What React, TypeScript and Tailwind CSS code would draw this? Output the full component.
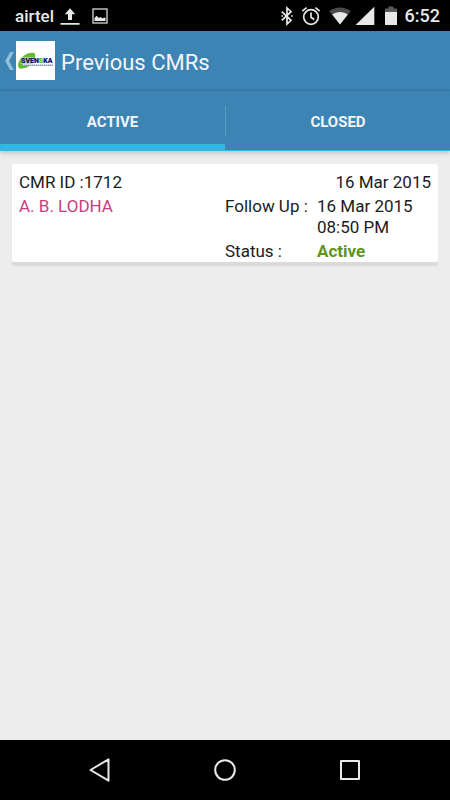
import { useState } from "react";

const StatusBar = () => {
  return (
    <div className="flex h-[31px] shrink-0 items-center justify-between bg-black pr-2.5 pl-[15px] text-[#e8e8e8]">
      <div className="flex items-center">
        <span className="text-[17px] leading-5 font-medium">airtel</span>
        <svg className="ml-[6px] h-5 w-5" viewBox="0 0 20 20" fill="currentColor" aria-hidden="true">
          <path d="M10 2.2 15.2 8.2H12V14H8V8.2H4.8ZM0.5 17h19v1.8H0.5z" />
        </svg>
        <svg className="ml-3 h-4 w-4" viewBox="0 0 16 16" fill="none" aria-hidden="true">
          <path d="M1 1h14v14H1z" stroke="#bdbdbd" strokeWidth="1.5" />
          <path d="M2.5 13V10l2-2.3 2.3 2.2L8.5 9l1.8 1.2L13.5 9.5V13z" fill="#e8e8e8" />
        </svg>
      </div>
      <div className="flex items-center">
        <svg className="h-5 w-3" viewBox="0 0 12 20" fill="none" stroke="currentColor" strokeWidth="1.7" aria-hidden="true">
          <path d="M0.8 5.6 10 14.3 6 18V2l4 3.7L0.8 14.4" />
          <path d="M0.5 9.2h1.6v1.6H0.5zM10 9.2h1.6v1.6H10z" fill="currentColor" stroke="none" />
        </svg>
        <svg className="ml-2 h-5 w-5" viewBox="0 0 20 20" fill="none" stroke="currentColor" strokeWidth="1.7" aria-hidden="true">
          <circle cx="10" cy="11" r="7.3" />
          <path d="M10 6.5v4.8l3.2 2.2M1.3 5.2 5.6 1.7M18.7 5.2 14.4 1.7" />
        </svg>
        <svg className="ml-2 h-5 w-[22px]" viewBox="0 0 22 20" aria-hidden="true">
          <path d="M0.3 5.2C6.5 0.3 15.5 0.3 21.7 5.2L11 18.6Z" fill="#4a4a4a" />
          <path d="M3.2 8.6C7.8 5 14.2 5 18.8 8.6L11 18.6Z" fill="#e8e8e8" />
        </svg>
        <svg className="ml-1 h-5 w-5" viewBox="0 0 20 20" fill="currentColor" aria-hidden="true">
          <path d="M19.3 0.8V19H0.6z" />
        </svg>
        <svg className="ml-2.5 h-5 w-3" viewBox="0 0 12 20" aria-hidden="true">
          <path d="M3.5 0.5h5V2.5H12V7H0V2.5h3.5z" fill="#5a5a5a" />
          <path d="M0 6h12v13H0z" fill="#e8e8e8" />
        </svg>
        <span className="ml-2 text-[18px] leading-5 font-medium">6:52</span>
      </div>
    </div>
  );
};

const Logo = () => {
  return (
    <svg className="h-[39px] w-[39px] bg-white" viewBox="0 0 39 39" role="img" aria-label="Svenska">
      <path
        d="M18.6 12.3C13 10.2 5.5 15 3 20.5C1.2 24.6 2 27.8 5.5 27.7C9 27.5 12.5 25.6 15 24.2L6.5 24.4L7 22.6H16.5C18.6 19 20.2 14.2 18.6 12.3Z"
        fill="#63bd32"
      />
      <path d="M6 16.2H18.4L16 22.8H4.5Z" fill="#b5e295" />
      <text x="5" y="22" fontSize="7" fontWeight="900" fill="#17186f" stroke="#17186f" strokeWidth="0.2">
        SVEN
        <tspan fill="#63bd32" stroke="#63bd32">
          S
        </tspan>
        KA
      </text>
      <path d="M6 24.2h31" stroke="#8991ad" strokeWidth="1.4" strokeDasharray="1.5 0.5" />
    </svg>
  );
};

const Header = () => {
  return (
    <header className="flex h-[60px] shrink-0 items-center border-b border-[#3779a3] bg-[#3b84b4] pl-[5px] text-[#f2f5f7]">
      <button type="button" aria-label="Back" className="flex items-center">
        <svg className="mr-0.5 h-5 w-[9px]" viewBox="0 0 9 20" fill="#94bfd9" aria-hidden="true">
          <path d="M5.2 1H8.8L4.2 10 8.8 19H5.2L0.2 10Z" />
        </svg>
        <Logo />
      </button>
      <h1 className="ml-1.5 pt-1 text-[22px] leading-7">Previous CMRs</h1>
    </header>
  );
};

const tabs = ["ACTIVE", "CLOSED"];

const Tabs = () => {
  const [selected, setSelected] = useState("ACTIVE");

  return (
    <div
      role="tablist"
      className="grid h-[60px] shrink-0 grid-cols-2 border-b border-[#33b5e5] bg-[#3b84b4] shadow-[0_2px_5px_rgba(0,0,0,0.2)]"
    >
      {tabs.map((tab, i) => (
        <button
          key={tab}
          type="button"
          role="tab"
          aria-selected={selected === tab}
          onClick={() => setSelected(tab)}
          className="flex flex-col text-[15px] font-bold text-[#f2f5f7]"
        >
          <span className="flex w-full grow items-center">
            {i > 0 && <span className="h-[30px] w-px bg-[#5b9ac3]" />}
            <span className="grow pt-1 text-center">{tab}</span>
          </span>
          <span className={selected === tab ? "-mt-1.5 h-1.5 w-full bg-[#33b5e5]" : "h-0 w-full"} />
        </button>
      ))}
    </div>
  );
};

const CmrCard = () => {
  return (
    <article className="rounded-xs bg-white px-[7px] pt-2 text-[17px] leading-[21px] text-[#1b1b1b] shadow-[0_4px_1px_#dadada]">
      <div className="flex justify-between">
        <h2>CMR ID :1712</h2>
        <time>16 Mar 2015</time>
      </div>
      <div className="mt-[3px] grid grid-cols-2">
        <p className="text-[#c73e82]">A. B. LODHA</p>
        <dl className="grid grid-cols-[92px_1fr] gap-y-[3px]">
          <dt>Follow Up :</dt>
          <dd>
            16 Mar 2015
            <br />
            08:50 PM
          </dd>
          <dt>Status :</dt>
          <dd className="font-bold text-[#5c961d]">Active</dd>
        </dl>
      </div>
    </article>
  );
};

const NavigationBar = () => {
  return (
    <nav className="flex h-[60px] shrink-0 items-center justify-center gap-[101px] bg-black text-[#e8e8e8]">
      <button type="button" aria-label="Back">
        <svg className="h-6 w-6" viewBox="0 0 24 24" fill="none" stroke="currentColor" strokeWidth="2" strokeLinejoin="round">
          <path d="M20.5 1.3V22.7L2.5 12Z" />
        </svg>
      </button>
      <button type="button" aria-label="Home">
        <svg className="h-6 w-6" viewBox="0 0 24 24" fill="none" stroke="currentColor" strokeWidth="2">
          <circle cx="12" cy="12" r="9.8" />
        </svg>
      </button>
      <button type="button" aria-label="Recent apps">
        <svg className="h-6 w-6" viewBox="0 0 24 24" fill="none" stroke="currentColor" strokeWidth="2" strokeLinejoin="round">
          <path d="M3 3h18v18H3z" />
        </svg>
      </button>
    </nav>
  );
};

const App = () => {
  return (
    <div className="flex min-h-screen flex-col bg-[#ededed] font-[Roboto,sans-serif]">
      <StatusBar />
      <Header />
      <Tabs />
      <main className="grow px-3 pt-[13px]">
        <CmrCard />
      </main>
      <NavigationBar />
    </div>
  );
};

export default App;
